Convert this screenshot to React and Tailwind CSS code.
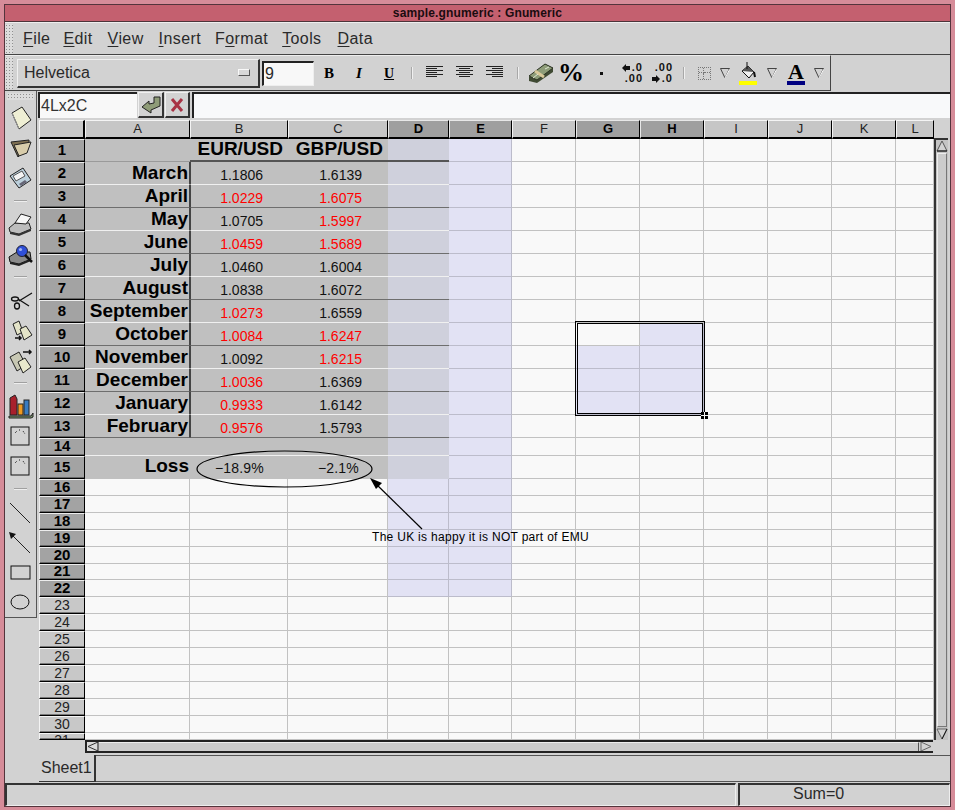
import React from "react";

const columns = ["A", "B", "C", "D", "E", "F", "G", "H", "I", "J", "K", "L"];
const selectedCols = ["D", "E", "G", "H"];

const data = {
  2: ["March", "1.1806", "1.6139"],
  3: ["April", "r1.0229", "r1.6075"],
  4: ["May", "1.0705", "r1.5997"],
  5: ["June", "r1.0459", "r1.5689"],
  6: ["July", "1.0460", "1.6004"],
  7: ["August", "1.0838", "1.6072"],
  8: ["September", "r1.0273", "1.6559"],
  9: ["October", "r1.0084", "r1.6247"],
  10: ["November", "1.0092", "r1.6215"],
  11: ["December", "r1.0036", "1.6369"],
  12: ["January", "r0.9933", "1.6142"],
  13: ["February", "r0.9576", "1.5793"],
};

function Ico({ children, size = 30 }) {
  return (
    <svg width={size} height={size} viewBox="0 0 30 30" className="block shrink-0">
      {children}
    </svg>
  );
}

function Handle({ className }) {
  return (
    <div
      className={`bg-[radial-gradient(#8f8f8f_1px,#dcdcdc_1px)] bg-[length:3px_3px] ${className}`}
    />
  );
}

function Triangle() {
  return (
    <svg width="12" height="12" viewBox="0 0 12 12" className="block">
      <path d="M1.5 1.5 H10.5 L6 11 Z" fill="none" stroke="#444" strokeWidth="1" />
      <path d="M10.5 2.5 L6 11" stroke="#fff" strokeWidth="1" />
    </svg>
  );
}

function AlignIcon({ lines }) {
  return (
    <svg width="18" height="16" viewBox="0 0 18 16" className="block">
      {lines.map((l, i) => (
        <rect key={i} x={l[0]} y={i * 2 + 1} width={l[1]} height="1" fill="#222" />
      ))}
    </svg>
  );
}

function MoneyIcon() {
  return (
    <svg width="26" height="22" viewBox="0 0 26 22" className="block">
      <path d="M1 15 L17 2 L25 6 L25 10 L9 21 L1 19 Z" fill="#3f4a33" />
      <path d="M1 14 L17 2 L25 6 L9 18 Z" fill="#8d9c78" stroke="#2c3324" strokeWidth="1" />
      <path d="M7 9 L16 15" stroke="#d8c89a" strokeWidth="3" />
      <path d="M5 16 L10 12 M17 7 L21 5" stroke="#dfe6d2" strokeWidth="1" />
    </svg>
  );
}

function Decimal({ top, bottom, arrowTop }) {
  const arrow = (
    <svg width="8" height="8" viewBox="0 0 8 8" className="block mr-[2px]">
      <path d={arrowTop ? "M0 4 L4 0 V2 H8 V6 H4 V8 Z" : "M8 4 L4 0 V2 H0 V6 H4 V8 Z"} fill="#111" />
    </svg>
  );
  return (
    <div className="flex flex-col items-end text-[11px] leading-[11px] font-bold tracking-[1px] text-[#111] font-['Liberation_Sans',sans-serif] w-[24px]">
      <div className="flex items-center">
        {arrowTop && arrow}
        {top}
      </div>
      <div className="flex items-center">
        {!arrowTop && arrow}
        {bottom}
      </div>
    </div>
  );
}

function Tool({ w = "w-[30px]", children }) {
  return <div className={`${w} h-full flex items-center justify-center shrink-0`}>{children}</div>;
}

function Sep() {
  return (
    <div className="w-[16px] h-full flex items-center justify-center shrink-0">
      <div className="w-[2px] h-[12px] bg-[#f0f0f0] border-l border-[#a8a8a8]" />
    </div>
  );
}

function SideSep() {
  return (
    <div className="h-[16px] flex items-center justify-center shrink-0">
      <div className="w-[13px] h-[2px] bg-[#eeeeee] border-t border-[#a0a0a0]" />
    </div>
  );
}

function ObjectBox() {
  return (
    <Ico>
      <rect x="6" y="6" width="18" height="18" fill="#d2d2d2" stroke="#111" />
      <path d="M10 12 L12 10 M14 9 L16 9 M18 10 L20 13" stroke="#222" strokeDasharray="1 1" fill="none" />
    </Ico>
  );
}

function SideBar() {
  return (
    <div className="w-[33px] flex flex-col border-r border-[#555] h-[527px] border-b">
      <Handle className="h-[8px] mt-[2px] mx-[2px]" />
      <div className="h-[3px]" />
      <Ico>
        <path d="M7 10 L17 4 L26 17 L14 26 Z" fill="#efefd4" stroke="#222" />
        <path d="M7 10 L14 26" stroke="#999" />
      </Ico>
      <Ico>
        <path d="M6 9 L24 7 L24 13 L13 24 Z" fill="#7f7052" stroke="#222" />
        <path d="M9 12 L26 9 L22 20 L14 23 Z" fill="#d8ccaa" stroke="#222" />
      </Ico>
      <Ico>
        <path d="M5 13 L18 5 L26 17 L14 25 Z" fill="#bcd0dc" stroke="#222" />
        <path d="M8 13 L17 8 L20 13 L11 18 Z" fill="#f4f4f4" stroke="#555" />
        <path d="M14 21 L20 17 L22 19 L16 23 Z" fill="#667" />
      </Ico>
      <SideSep />
      <Ico>
        <path d="M4 19 L10 14 L24 14 L26 20 L14 25 L5 23 Z" fill="#bdbdbd" stroke="#222" />
        <path d="M10 14 L16 5 L26 8 L21 15 Z" fill="#f6f6f6" stroke="#222" />
        <path d="M5 23 L14 25 L26 20 L26 22 L14 27 L5 25 Z" fill="#333" />
      </Ico>
      <Ico>
        <path d="M4 18 L12 13 L25 13 L26 20 L14 25 L5 23 Z" fill="#8a8a8a" stroke="#111" />
        <path d="M5 23 L14 25 L26 20 L26 22 L14 27 L5 25 Z" fill="#222" />
        <circle cx="17" cy="12" r="5.5" fill="#2f4fd8" stroke="#223" />
        <circle cx="15.5" cy="10.5" r="1.6" fill="#9fb2f5" />
        <path d="M20 16 L27 23" stroke="#111" strokeWidth="2.5" />
      </Ico>
      <SideSep />
      <Ico>
        <path d="M14 16 L27 8 M13 14 L24 21" stroke="#111" strokeWidth="1.3" />
        <ellipse cx="10" cy="14" rx="3.5" ry="2" fill="none" stroke="#111" strokeWidth="1.3" />
        <ellipse cx="12" cy="21" rx="2.5" ry="3" fill="none" stroke="#111" strokeWidth="1.3" />
      </Ico>
      <Ico>
        <path d="M8 9 L14 6 L18 17 L12 20 Z" fill="#e4e4c8" stroke="#222" />
        <path d="M15 14 L21 11 L27 20 L19 25 Z" fill="#e4e4c8" stroke="#222" />
        <path d="M10 23 H16 M14 21 L16 23 L14 25" stroke="#111" strokeWidth="1.5" fill="none" />
      </Ico>
      <Ico>
        <path d="M5 12 L14 7 L21 20 L12 26 Z" fill="#c8c8b4" stroke="#222" />
        <path d="M13 17 L20 13 L26 22 L18 28 Z" fill="#e8e8cc" stroke="#222" />
        <path d="M18 7 H26 M24 5 L26 7 L24 9" stroke="#111" strokeWidth="1.5" fill="none" />
      </Ico>
      <SideSep />
      <Ico>
        <path d="M5 7 L10 4 L12 8 V24 H5 Z" fill="#a8202c" stroke="#222" />
        <rect x="13" y="13" width="5" height="11" fill="#f09a20" stroke="#222" />
        <rect x="19" y="9" width="5" height="15" fill="#3a7cc0" stroke="#222" />
        <path d="M4 25 H26 L28 22 V26 L26 27 H4 Z" fill="#7f9a70" stroke="#222" />
      </Ico>
      <ObjectBox />
      <ObjectBox />
      <SideSep />
      <Ico>
        <path d="M5 6 L25 26" stroke="#222" />
      </Ico>
      <Ico>
        <path d="M5 6 L25 26" stroke="#222" />
        <path d="M4 5 L11 7 L6 12 Z" fill="#111" />
      </Ico>
      <Ico>
        <rect x="6" y="9" width="19" height="13" fill="#d2d2d2" stroke="#111" />
      </Ico>
      <Ico>
        <ellipse cx="15" cy="15" rx="9" ry="7" fill="#d2d2d2" stroke="#111" />
      </Ico>
    </div>
  );
}

function ColHeader({ name }) {
  const selected = selectedCols.includes(name);
  return (
    <div
      className={
        selected
          ? "bg-[#9f9f9f] font-bold text-[13px] text-black flex items-center justify-center border-t border-l border-t-[#e8e8e8] border-l-[#e8e8e8] border-r border-r-black border-b-2 border-b-black"
          : "bg-[#c6c6c6] text-[13px] text-[#222] flex items-center justify-center border-t border-l border-t-[#f4f4f4] border-l-[#f4f4f4] border-r border-r-black border-b-2 border-b-black"
      }
    >
      {name}
    </div>
  );
}

function RowHeader({ n }) {
  const selected = n <= 22;
  return (
    <div
      className={
        selected
          ? "bg-[#a3a3a3] font-bold text-[15px] leading-[12px] pb-[2px] text-black flex items-center justify-center overflow-hidden border-t border-l border-t-[#ececec] border-l-[#ececec] border-r border-r-black border-b border-b-black shadow-[inset_0_-1px_0_#666666]"
          : `bg-[#c8c8c8] text-[14px] leading-[12px] text-[#222] flex justify-center overflow-hidden border-t border-l border-t-[#f4f4f4] border-l-[#f4f4f4] border-r border-r-black border-b border-b-black shadow-[inset_0_-1px_0_#777777] ${
              n === 31 ? "items-start" : "items-center pb-[2px]"
            }`
      }
    >
      {n}
    </div>
  );
}

function lineClass(r, col) {
  if (r === 15) return "";
  if (r === 1) return col === "A" ? "border-b border-[#9a9a9a]" : "border-b-2 border-[#555555]";
  return r % 2 === 1 ? "border-b border-[#6e6e6e]" : "border-b border-[#f0f0f0]";
}

function Cell({ r, col }) {
  // grey block of the table
  if (r <= 15 && (col === "A" || col === "B" || col === "C" || col === "D")) {
    const bg = col === "D" ? "bg-[#cfd0dc]" : "bg-[#c0c0c0]";
    let side = "";
    if (r >= 2 && r <= 13 && col === "A") side = "border-r border-r-[#444444]";
    if (r >= 2 && r <= 13 && col === "B") side = "border-l border-l-[#444444]";
    const row = data[r];
    let content = null;
    if (r === 1 && col === "B")
      content = <span className="text-[19px] font-bold pr-[5px]">EUR/USD</span>;
    if (r === 1 && col === "C")
      content = <span className="text-[19px] font-bold pr-[5px] tracking-[0.1px]">GBP/USD</span>;
    if (row && col === "A") content = <span className="text-[19px] font-bold pr-[1px]">{row[0]}</span>;
    if (row && (col === "B" || col === "C")) {
      const v = row[col === "B" ? 1 : 2];
      const red = v[0] === "r";
      content = (
        <span
          className={`text-[14px] pt-[5px] ${col === "B" ? "pr-[25px]" : "pr-[26px]"} ${
            red ? "text-[#ff0000]" : "text-[#111]"
          }`}
        >
          {red ? v.slice(1) : v}
        </span>
      );
    }
    if (r === 15 && col === "A") content = <span className="text-[19px] font-bold pr-[1px] pb-[2px]">Loss</span>;
    if (r === 15 && col === "B") content = <span className="text-[14px] pr-[24px] pt-[3px] tracking-[0.2px] text-[#111]">−18.9%</span>;
    if (r === 15 && col === "C") content = <span className="text-[14px] pr-[29px] pt-[3px] tracking-[0.2px] text-[#111]">−2.1%</span>;
    return (
      <div className={`${bg} ${lineClass(r, col)} ${side} pb-[2px] flex items-center justify-end leading-none text-black`}>
        {content}
      </div>
    );
  }

  const lavenderE = col === "E" && r <= 22;
  const lavenderD = col === "D" && r <= 22;
  const inBox =
    ((col === "G" || col === "H") && r >= 10 && r <= 12) || (col === "H" && r === 9);
  if (lavenderE || lavenderD || inBox) {
    return <div className="bg-[#e2e2f4] border-r border-b border-[#bcbccb]" />;
  }
  return <div className="bg-[#f9f9f9] border-r border-b border-[#c2c2c2]" />;
}

function Sheet() {
  const rows = Array.from({ length: 31 }, (_, i) => i + 1);
  return (
    <div className="relative w-[895px] h-[620px] overflow-hidden grid grid-cols-[46px_105px_98px_100px_61px_63px_64px_64px_64px_64px_64px_64px_38px] grid-rows-[19px_repeat(13,23px)_18px_23px_repeat(5,17px)_16px_repeat(9,17px)_7px]">
      <div className="bg-[#c8c8c8] border-t border-l border-t-[#f4f4f4] border-l-[#f4f4f4] border-r-2 border-r-black border-b-2 border-b-black" />
      {columns.map((c) => (
        <ColHeader key={c} name={c} />
      ))}
      {rows.map((r) => (
        <React.Fragment key={r}>
          <RowHeader n={r} />
          {columns.map((c) => (
            <Cell key={c} r={r} col={c} />
          ))}
        </React.Fragment>
      ))}

      {/* drawing objects on top of the sheet */}
      <svg className="absolute left-0 top-0 pointer-events-none" width="895" height="620">
        <ellipse cx="245.5" cy="349" rx="87.5" ry="18" fill="none" stroke="#000" strokeWidth="1.2" />
        <path d="M383 409 L335 362" stroke="#000" strokeWidth="1.2" />
        <path d="M331 358 L343 363 L337 369 Z" fill="#000" />
      </svg>
      <span className="absolute left-[333px] top-[409px] text-[12px] leading-[16px] tracking-[0.3px] text-black whitespace-nowrap">
        The UK is happy it is NOT part of EMU
      </span>

      {/* cursor box */}
      <div className="absolute left-[536px] top-[201px] w-[130px] h-[95px] border border-black p-[1px]">
        <div className="w-full h-full border border-black" />
      </div>
      <div className="absolute left-[662px] top-[292px] w-[7px] h-[7px] bg-[#f4f4f4] grid grid-cols-2 gap-[1px]">
        <div className="bg-black" />
        <div className="bg-black" />
        <div className="bg-black" />
        <div className="bg-black" />
      </div>
    </div>
  );
}

function VScroll() {
  return (
    <div className="w-[14px] h-[620px] pt-[18px] shrink-0">
      <div className="h-full flex flex-col bg-[#c4c4c4] border-l-2 border-t-2 border-[#333]">
        <svg width="12" height="12" viewBox="0 0 12 12" className="block shrink-0">
          <path d="M6 1 L11 11 H1 Z" fill="#d2d2d2" stroke="#555" />
          <path d="M1 11 H11" stroke="#111" />
        </svg>
        <div className="flex-1 m-[1px] bg-[#cccccc] border-t border-l border-[#eeeeee] border-r border-b border-r-[#777] border-b-[#777]" />
        <svg width="12" height="12" viewBox="0 0 12 12" className="block shrink-0">
          <path d="M1 1 H11 L6 11 Z" fill="#d2d2d2" stroke="#666" />
          <path d="M11 1 L6 11" stroke="#111" />
        </svg>
      </div>
    </div>
  );
}

function HScroll() {
  return (
    <div className="ml-[46px] w-[848px] h-[13px] flex bg-[#c4c4c4] border-l-2 border-t-2 border-b-2 border-[#222]">
      <svg width="12" height="9" viewBox="0 0 12 9" className="block shrink-0">
        <rect width="12" height="9" fill="#dcdcdc" />
        <path d="M11 0 L1 4.5 L11 9" fill="none" stroke="#333" />
        <path d="M11 0 V9" stroke="#111" />
      </svg>
      <div className="flex-1 bg-[#cccccc] border-t border-[#eeeeee] border-r border-r-[#555]" />
      <svg width="14" height="9" viewBox="0 0 14 9" className="block shrink-0">
        <rect width="14" height="9" fill="#d2d2d2" />
        <path d="M2 0 L12 4.5 L2 9 Z" fill="none" stroke="#666" />
      </svg>
    </div>
  );
}

export default function App() {
  return (
    <div className="w-[955px] h-[810px] bg-[#d68c99] pt-[4px] px-[4px] pb-[3px] overflow-hidden font-['Liberation_Sans',Arial,sans-serif] text-black">
      <div className="h-full flex flex-col bg-[#d2d2d2] border-t border-l border-[#54343c] border-b border-r">
        {/* title bar */}
        <div className="h-[17px] shrink-0 bg-[#c4606f] border-b border-[#4c343a] flex items-center justify-center text-[12px] tracking-[0.15px] font-bold text-[#1a0c10]">
          sample.gnumeric : Gnumeric
        </div>

        {/* menu bar */}
        <div className="h-[33px] shrink-0 flex items-center border-b border-[#444] border-t border-t-[#eeeeee]">
          <Handle className="w-[8px] h-[30px]" />
          <div className="flex ml-[10px] gap-[14px] text-[16px] tracking-[0.4px] text-[#2a2a2a]">
            <span><span className="underline underline-offset-2">F</span>ile</span>
            <span className="-ml-[1px]"><span className="underline underline-offset-2">E</span>dit</span>
            <span className="ml-[1px]"><span className="underline underline-offset-2">V</span>iew</span>
            <span className="ml-[1px]"><span className="underline underline-offset-2">I</span>nsert</span>
            <span>F<span className="underline underline-offset-2">o</span>rmat</span>
            <span><span className="underline underline-offset-2">T</span>ools</span>
            <span className="ml-[2px]"><span className="underline underline-offset-2">D</span>ata</span>
          </div>
        </div>

        {/* format toolbar */}
        <div className="h-[36px] shrink-0 flex">
          <div className="w-[826px] h-full flex items-center border-b border-r border-[#444] border-t border-t-[#eeeeee]">
            <Handle className="w-[8px] h-[32px] shrink-0" />
            <div className="w-[243px] h-[29px] ml-[4px] shrink-0 flex items-center justify-between pl-[6px] pr-[8px] border-t border-l border-[#f0f0f0] border-r-2 border-b-2 border-r-[#333] border-b-[#333] text-[16px] text-[#2a2a2a]">
              Helvetica
              <div className="w-[12px] h-[7px] bg-[#d8d8d8] border-t border-l border-[#f8f8f8] border-r border-b border-r-[#555] border-b-[#555]" />
            </div>
            <div className="w-[52px] h-[25px] ml-[2px] shrink-0 bg-[#f8f8f8] border-t-2 border-l-2 border-[#222] border-r border-b border-r-[#eeeeee] border-b-[#eeeeee] flex items-center pl-[1px] text-[16px] text-[#2a2a2a]">
              9
            </div>
            <div className="h-full flex items-center font-['Liberation_Serif',serif] font-bold">
              <Tool><span className="text-[15px]">B</span></Tool>
              <Tool><span className="text-[15px] italic">I</span></Tool>
              <Tool><span className="text-[14px] underline">U</span></Tool>
              <Sep />
              <Tool><AlignIcon lines={[[0, 17], [0, 11], [0, 17], [0, 11], [0, 17], [0, 11]]} /></Tool>
              <Tool><AlignIcon lines={[[0, 17], [3, 11], [0, 17], [3, 11], [0, 17], [3, 11]]} /></Tool>
              <Tool><AlignIcon lines={[[0, 17], [6, 11], [0, 17], [6, 11], [0, 17], [6, 11]]} /></Tool>
              <Sep />
              <Tool><MoneyIcon /></Tool>
              <Tool><span className="text-[26px] leading-none">%</span></Tool>
              <Tool><div className="w-[3px] h-[3px] bg-[#111]" /></Tool>
              <Tool><Decimal top=".0" bottom=".00" arrowTop /></Tool>
              <Tool><Decimal top=".00" bottom=".0" /></Tool>
              <Sep />
              <Tool w="w-[24px]">
                <div className="w-[13px] h-[13px] grid grid-cols-2 grid-rows-2 border border-dotted border-[#777]">
                  <div className="border-r border-b border-dotted border-[#777]" />
                  <div className="border-b border-dotted border-[#777]" />
                  <div className="border-r border-dotted border-[#777]" />
                  <div />
                </div>
              </Tool>
              <Tool w="w-[18px]"><Triangle /></Tool>
              <Tool w="w-[28px]">
                <div className="flex flex-col items-center">
                  <svg width="18" height="19" viewBox="0 0 18 19" className="block">
                    <path d="M3 9 L9 4 L15 10 L10 16 Z" fill="#f0f0f0" stroke="#111" />
                    <path d="M3 9 L9 4 L15 10 Z" fill="#555" />
                    <path d="M8 0 V7" stroke="#111" />
                    <path d="M15 10 L16 15" stroke="#111" strokeWidth="2" />
                  </svg>
                  <div className="w-[18px] h-[4px] bg-[#ffff00]" />
                </div>
              </Tool>
              <Tool w="w-[20px]"><Triangle /></Tool>
              <Tool w="w-[28px]">
                <div className="flex flex-col items-center">
                  <span className="text-[22px] leading-[19px]">A</span>
                  <div className="w-[18px] h-[4px] bg-[#000080]" />
                </div>
              </Tool>
              <Tool w="w-[18px]"><Triangle /></Tool>
            </div>
          </div>
        </div>

        {/* body */}
        <div className="flex-1 flex min-h-0">
          <SideBar />
          <div className="flex-1 flex flex-col pl-[1px]">
            <div className="h-[27px] shrink-0 flex mt-[1px] gap-[1px]">
              <div className="w-[99px] h-[26px] bg-[#f8f8f8] border-t-2 border-l-2 border-[#222] flex items-center pl-[1px] text-[16px] text-[#333]">
                4Lx2C
              </div>
              <div className="w-[26px] h-[26px] flex items-center justify-center border-t border-l border-[#f0f0f0] border-r-2 border-b-2 border-r-[#333] border-b-[#333]">
                <svg width="22" height="20" viewBox="0 0 22 20" className="block">
                  <path d="M2 12 L9 6 V9 L14 8 L14 2 L20 2 L20 11 L11 15 V18 Z" fill="#8f9c78" stroke="#222" />
                </svg>
              </div>
              <div className="w-[25px] h-[26px] flex items-center justify-center border-t border-l border-[#f0f0f0] border-r-2 border-b-2 border-r-[#333] border-b-[#333]">
                <svg width="14" height="16" viewBox="0 0 14 16" className="block">
                  <path d="M2 2 L12 14 M12 2 L2 14" stroke="#a83244" strokeWidth="3" />
                </svg>
              </div>
              <div className="w-[758px] h-[26px] ml-[1px] bg-[#f8f9fa] border-t-2 border-l-2 border-[#222]" />
            </div>
            <div className="h-[1px] shrink-0" />
            <div className="ml-[1px] flex flex-col">
              <div className="flex">
                <Sheet />
                <VScroll />
              </div>
              <HScroll />
            </div>
            <div className="mt-[2px] flex-1 ml-[1px] flex">
              <div className="w-[57px] h-[27px] bg-[#d2d2d2] border-r-2 border-b border-[#333] pl-[2px] text-[16px] text-[#2a2a2a] flex items-center">
                Sheet1
              </div>
              <div className="flex-1 h-[27px] border-t border-[#555] border-b border-b-[#555]" />
            </div>
          </div>
        </div>

        {/* status bar */}
        <div className="h-[23px] shrink-0 flex gap-[2px]">
          <div className="w-[731px] border-t-2 border-l-2 border-[#333] border-r border-b border-r-[#eeeeee] border-b-[#eeeeee]" />
          <div className="flex-1 border-t-2 border-l-2 border-[#333] border-r border-b border-r-[#eeeeee] border-b-[#eeeeee] pl-[53px] pb-[3px] flex items-center text-[16px] text-[#2a2a2a]">
            Sum=0
          </div>
        </div>
      </div>
    </div>
  );
}
